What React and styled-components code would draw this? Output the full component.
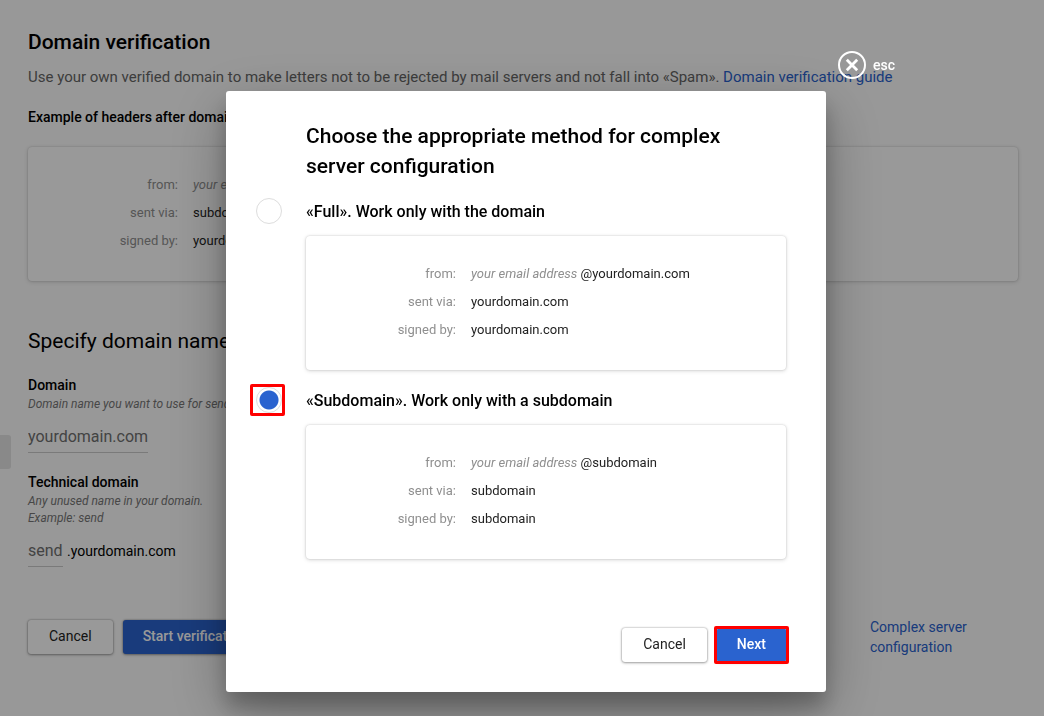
import React from "react";
import styled, { createGlobalStyle, css } from "styled-components";

const GlobalStyle = createGlobalStyle`
  * {
    box-sizing: border-box;
  }
  body {
    margin: 0;
    background: #fdfdfd;
    color: #000;
    font-family: Roboto, "Liberation Sans", sans-serif;
    font-size: 14px;
  }
  button,
  input {
    font-family: inherit;
  }
`;

const Page = styled.main`
  min-height: 100vh;
  padding: 27px 26px 61px 28px;
  overflow: hidden;
`;

const PageTitle = styled.h1`
  margin: 0 0 10px;
  font-size: 21px;
  line-height: 30px;
  font-weight: 500;
`;

const Intro = styled.p`
  margin: 0 0 20px;
  font-size: 15px;
  line-height: 20px;
  color: #666;
`;

const Link = styled.a`
  color: #2a63cf;
  text-decoration: none;
`;

const Label = styled.h2`
  margin: 0 0 20px;
  font-size: 14px;
  line-height: 20px;
  font-weight: 500;
`;

const SectionTitle = styled.h2`
  margin: 45px 0 19px;
  font-size: 21px;
  line-height: 30px;
  font-weight: 400;
`;

const HeadersCard = styled.dl`
  display: grid;
  grid-template-columns: 150px 1fr;
  grid-auto-rows: 28px;
  column-gap: 15px;
  margin: 0;
  padding: 24px 0 26px;
  border-radius: 4px;
  background: #fff;
  box-shadow: 0 0 2px rgba(0, 0, 0, 0.18), 0 1px 4px rgba(0, 0, 0, 0.15);
  font-size: 13px;
  line-height: 28px;

  dt {
    text-align: right;
    color: #8f8f8f;
  }
  dd {
    margin: 0;
    color: #222;
  }
  em {
    color: #8f8f8f;
  }
`;

const Field = styled.div`
  display: flex;
  flex-direction: column;
  align-items: flex-start;
  margin-bottom: 19px;

  label {
    font-weight: 500;
    line-height: 21px;
  }
  small {
    font-size: 12px;
    line-height: 17px;
    font-style: italic;
    color: #777;
  }
`;

const InputRow = styled.div`
  display: flex;
  align-items: center;
  gap: 4px;
  margin-top: 9px;

  span {
    padding-bottom: 2px;
  }
`;

const TextInput = styled.input`
  width: ${(props) => props.$width};
  height: 31px;
  padding: 0 0 2px;
  border: 0;
  border-bottom: 1px solid #ccc;
  background: transparent;
  font-size: 16px;
  color: #707070;
`;

const PageFooter = styled.footer`
  display: flex;
  align-items: center;
  gap: 10px;
  margin-top: 50px;
`;

const ComplexLink = styled(Link)`
  width: 148px;
  margin-left: auto;
  line-height: 20px;
`;

const Button = styled.button`
  height: 34px;
  padding: 0 21px 2px;
  border: 0;
  border-radius: 3px;
  font-size: 14px;
  white-space: nowrap;
  background: #fff;
  color: #222;
  box-shadow: 0 0 2px rgba(0, 0, 0, 0.4), 0 1px 3px rgba(0, 0, 0, 0.3);

  ${(props) =>
    props.$primary &&
    css`
      padding: 0 20px 2px;
      background: #2a63cf;
      color: #fff;
      font-weight: 500;
    `}
`;

const NextButton = styled(Button)`
  position: relative;

  &::after {
    content: "";
    position: absolute;
    inset: -2px -3px;
    border: 3px solid #ff0000;
    border-radius: 2px;
    pointer-events: none;
  }
`;

const SideTab = styled.div`
  position: fixed;
  left: 0;
  top: 435px;
  width: 11px;
  height: 34px;
  border-radius: 0 3px 3px 0;
  background: #e4e4e4;
`;

const Overlay = styled.div`
  position: fixed;
  inset: 0;
  display: flex;
  justify-content: center;
  align-items: flex-start;
  padding: 91px 0 24px 8px;
  background: rgba(0, 0, 0, 0.4);
`;

const Dialog = styled.section`
  position: relative;
  width: 600px;
  padding: 30px 40px 30px 30px;
  border-radius: 3px;
  background: #fff;
  box-shadow: 0 19px 60px rgba(0, 0, 0, 0.3), 0 15px 20px rgba(0, 0, 0, 0.22);
`;

const DialogTitle = styled.h2`
  margin: 0 40px 15px 50px;
  font-size: 21px;
  line-height: 30px;
  font-weight: 500;
`;

const CloseButton = styled.button`
  position: absolute;
  left: calc(100% + 12px);
  top: -40px;
  display: flex;
  align-items: center;
  gap: 7px;
  padding: 0;
  border: 0;
  background: none;
  color: #fff;
  font-size: 14px;
  font-weight: 500;
`;

const Option = styled.div`
  margin-bottom: 15px;

  label {
    display: flex;
    align-items: center;
    gap: 24px;
    height: 30px;
    margin-bottom: 10px;
    font-size: 16px;
    font-weight: 500;
  }
  ${HeadersCard} {
    margin-left: 50px;
  }
`;

const RadioFrame = styled.span`
  position: relative;
  display: flex;

  ${(props) =>
    props.$marked &&
    css`
      &::after {
        content: "";
        position: absolute;
        inset: -3px -3px -3px -6px;
        border: 3px solid #ff0000;
        border-radius: 2px;
        pointer-events: none;
      }
    `}
`;

const Radio = styled.input`
  appearance: none;
  width: 26px;
  height: 26px;
  margin: 0;
  border: 1px solid #ddd;
  border-radius: 50%;
  background: #fff;

  &:checked {
    background: radial-gradient(circle, #2a63cf 9px, #fff 10px);
  }
`;

const DialogFooter = styled.footer`
  display: flex;
  justify-content: flex-end;
  gap: 10px;
  margin-top: 69px;
`;

function Headers({ host, via, signed }) {
  return (
    <HeadersCard>
      <dt>from:</dt>
      <dd>
        <em>your email address</em> @{host}
      </dd>
      <dt>sent via:</dt>
      <dd>{via}</dd>
      <dt>signed by:</dt>
      <dd>{signed}</dd>
    </HeadersCard>
  );
}

function CloseIcon() {
  return (
    <svg width="28" height="28" viewBox="0 0 28 28" fill="none" stroke="currentColor">
      <circle cx="14" cy="14" r="13" strokeWidth="2" />
      <path d="M8.8 8.8l10.4 10.4M19.2 8.8l-10.4 10.4" strokeWidth="2.8" />
    </svg>
  );
}

const methods = [
  {
    id: "full",
    title: "«Full». Work only with the domain",
    host: "yourdomain.com",
  },
  {
    id: "subdomain",
    title: "«Subdomain». Work only with a subdomain",
    host: "subdomain",
  },
];

function MethodDialog() {
  const [method, setMethod] = React.useState("subdomain");

  return (
    <Overlay>
      <Dialog role="dialog" aria-modal="true" aria-labelledby="dialog-title">
        <CloseButton type="button">
          <CloseIcon />
          esc
        </CloseButton>
        <DialogTitle id="dialog-title">
          Choose the appropriate method for complex server configuration
        </DialogTitle>
        {methods.map((item) => (
          <Option key={item.id}>
            <label htmlFor={item.id}>
              <RadioFrame $marked={item.id === "subdomain"}>
                <Radio
                  type="radio"
                  name="method"
                  id={item.id}
                  checked={method === item.id}
                  onChange={() => setMethod(item.id)}
                />
              </RadioFrame>
              {item.title}
            </label>
            <Headers host={item.host} via={item.host} signed={item.host} />
          </Option>
        ))}
        <DialogFooter>
          <Button type="button">Cancel</Button>
          <NextButton type="button" $primary>
            Next
          </NextButton>
        </DialogFooter>
      </Dialog>
    </Overlay>
  );
}

function App() {
  const [form, setForm] = React.useState({
    domain: "yourdomain.com",
    technical: "send",
  });

  function handleChange(event) {
    const { name, value } = event.target;
    setForm((prevForm) => ({ ...prevForm, [name]: value }));
  }

  return (
    <>
      <GlobalStyle />
      <Page>
        <PageTitle>Domain verification</PageTitle>
        <Intro>
          Use your own verified domain to make letters not to be rejected by mail servers and
          not fall into «Spam». <Link href="#guide">Domain verification guide</Link>
        </Intro>
        <Label>Example of headers after domain</Label>
        <Headers host="yourdomain.com" via="subdomain" signed="yourdomain.com" />

        <SectionTitle>Specify domain name</SectionTitle>
        <Field>
          <label htmlFor="domain">Domain</label>
          <small>Domain name you want to use for sending</small>
          <InputRow>
            <TextInput
              $width="120px"
              id="domain"
              name="domain"
              value={form.domain}
              onChange={handleChange}
            />
          </InputRow>
        </Field>
        <Field>
          <label htmlFor="technical">Technical domain</label>
          <small>Any unused name in your domain.</small>
          <small>Example: send</small>
          <InputRow>
            <TextInput
              $width="35px"
              id="technical"
              name="technical"
              value={form.technical}
              onChange={handleChange}
            />
            <span>.yourdomain.com</span>
          </InputRow>
        </Field>
        <PageFooter>
          <Button type="button">Cancel</Button>
          <Button type="button" $primary>
            Start verification
          </Button>
          <ComplexLink href="#complex">Complex server configuration</ComplexLink>
        </PageFooter>
      </Page>
      <SideTab />
      <MethodDialog />
    </>
  );
}

export default App;
